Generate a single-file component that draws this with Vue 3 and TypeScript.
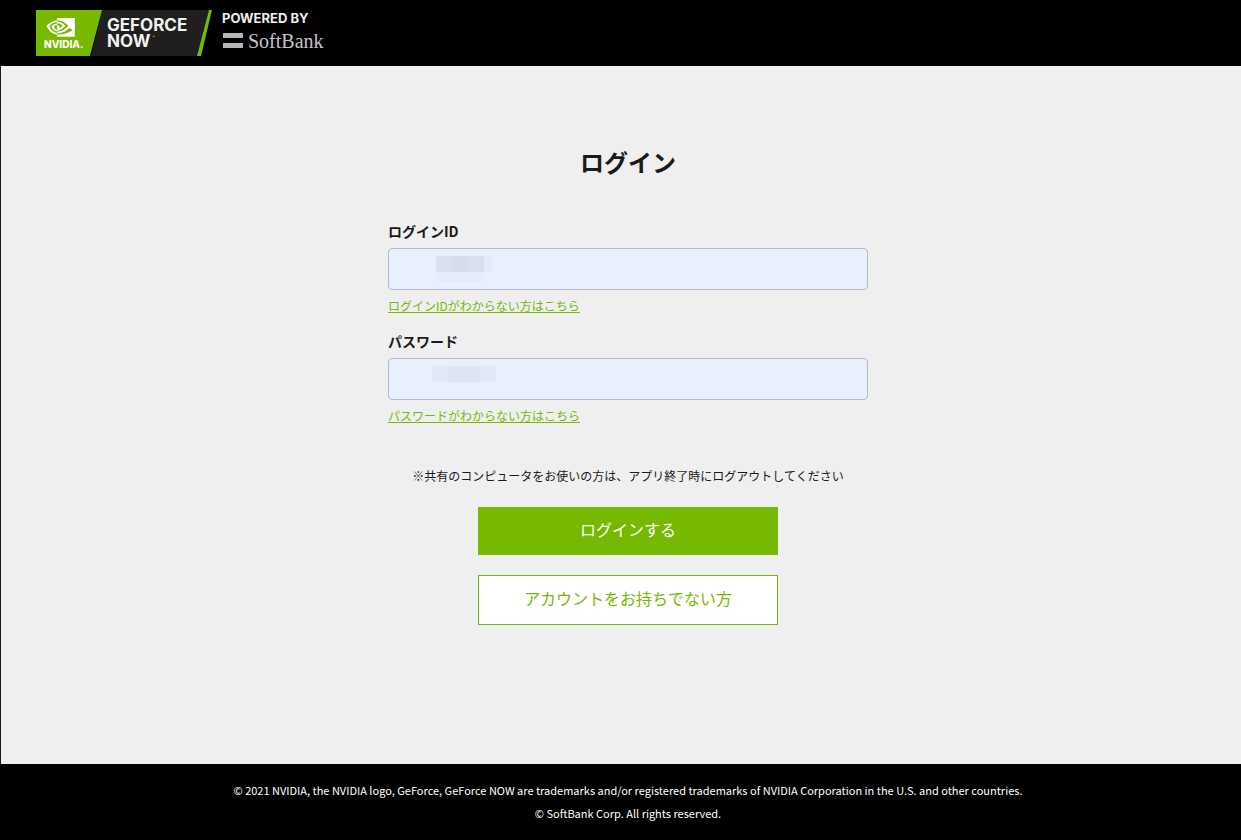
<script setup lang="ts">
import { ref } from 'vue'

interface Field {
  id: string
  label: string
  type: string
  help: string
  mask: string
}

const fields: Field[] = [
  { id: 'login-id', label: 'ログインID', type: 'text', help: 'ログインIDがわからない方はこちら', mask: 'mask-id' },
  { id: 'password', label: 'パスワード', type: 'password', help: 'パスワードがわからない方はこちら', mask: 'mask-password' },
]
const values = ref<Record<string, string>>({ 'login-id': '', password: '' })
</script>

<template>
  <div class="page">
    <header class="header">
      <svg class="logo" width="290" height="46" viewBox="0 0 290 46" role="img" aria-label="NVIDIA GeForce NOW powered by SoftBank">
        <path d="M66 0H173L162 46H55z" fill="#1f1f1f" />
        <path d="M0 0H66L54 46H0z" fill="#76b900" />
        <path d="M173 0h3L165 46h-4z" fill="#76b900" />
        <g transform="translate(10.5 3.2) scale(1.18)" fill="#fff">
          <path d="M8.948 8.798v-1.43a6.7 6.7 0 0 1 .424-.018c3.922-.124 6.493 3.374 6.493 3.374s-2.774 3.851-5.75 3.851c-.398 0-.787-.062-1.158-.185v-4.346c1.528.185 1.837.857 2.747 2.385l2.04-1.714s-1.492-1.952-4-1.952a6.016 6.016 0 0 0-.796.035m0-4.735v2.138l.424-.027c5.45-.185 9.01 4.47 9.01 4.47s-4.08 4.964-8.33 4.964c-.37 0-.733-.035-1.095-.097v1.325c.3.035.61.062.91.062 3.957 0 6.82-2.023 9.593-4.408.459.371 2.34 1.263 2.73 1.652-2.633 2.208-8.772 3.984-12.253 3.984-.335 0-.653-.018-.971-.053v1.864H24V4.063zm0 10.326v1.131c-3.657-.654-4.673-4.46-4.673-4.46s1.758-1.944 4.673-2.262v1.237H8.94c-1.528-.186-2.73 1.245-2.73 1.245s.68 2.412 2.739 3.11M2.456 10.9s2.164-3.197 6.5-3.533V6.201C4.153 6.59 0 10.653 0 10.653s2.35 6.802 8.948 7.42v-1.237c-4.84-.6-6.492-5.936-6.492-5.936z" />
        </g>
        <text class="brand" x="8" y="38">NVIDIA.</text>
        <text class="product"><tspan x="71" y="21">GEFORCE</tspan><tspan x="71" y="37">NOW</tspan></text>
        <text class="tm" x="116" y="29">™</text>
        <text class="powered" x="186" y="13">POWERED BY</text>
        <path d="M187 23h20v5h-20zM187 33h20v5h-20z" fill="#b5b5b8" />
        <text class="softbank" x="212" y="38">SoftBank</text>
      </svg>
    </header>

    <main class="main">
      <h1 class="title">ログイン</h1>
      <form class="form" @submit.prevent>
        <div v-for="f in fields" :key="f.id" class="field">
          <label class="label" :for="f.id">{{ f.label }}</label>
          <div class="control">
            <input :id="f.id" v-model="values[f.id]" class="input" :type="f.type" />
            <span class="mask" :class="f.mask" aria-hidden="true"></span>
          </div>
          <a class="help" href="#">{{ f.help }}</a>
        </div>
        <p class="notice">※共有のコンピュータをお使いの方は、アプリ終了時にログアウトしてください</p>
        <button class="button primary" type="submit">ログインする</button>
        <button class="button secondary" type="button">アカウントをお持ちでない方</button>
      </form>
    </main>

    <footer class="footer">
      <p>© 2021 NVIDIA, the NVIDIA logo, GeForce, GeForce NOW are trademarks and/or registered trademarks of NVIDIA Corporation in the U.S. and other countries.</p>
      <p>© SoftBank Corp. All rights reserved.</p>
    </footer>
  </div>
</template>

<style>
body {
  margin: 0;
  background: #000;
}
</style>

<style scoped>
.page {
  box-sizing: border-box;
  min-height: 100vh;
  display: flex;
  flex-direction: column;
  font-family: "Noto Sans CJK JP", sans-serif;
  color: #1a1a1a;
}
.header {
  box-sizing: border-box;
  height: 66px;
  padding: 10px 36px;
  background: #000;
}
.logo {
  display: block;
}
.brand,
.product,
.powered {
  font-family: Inter, sans-serif;
  font-weight: 700;
  fill: #fff;
}
.brand {
  font-size: 10px;
  font-weight: 800;
}
.product {
  font-size: 17px;
  fill: #f2f2f2;
}
.tm {
  font-family: Roboto, sans-serif;
  font-size: 5px;
  fill: #ccc;
}
.powered {
  font-size: 13px;
  fill: #eee;
}
.softbank {
  font-family: "Liberation Serif", serif;
  font-size: 20px;
  fill: #c4c4c8;
}
.main {
  flex: 1;
  padding: 78px 0 40px 14px;
  border-left: 1px solid #1a1a1a;
  background: #efefef;
}
.title {
  margin: 0 0 41px;
  font-size: 24px;
  line-height: 36px;
  font-weight: 700;
  text-align: center;
}
.form {
  display: flex;
  flex-direction: column;
  align-items: center;
}
.field {
  width: 100%;
  max-width: 480px;
  margin-bottom: 15px;
}
.label {
  display: block;
  margin-bottom: 7px;
  font-size: 14px;
  line-height: 20px;
  font-weight: 700;
}
.control {
  position: relative;
}
.input {
  display: block;
  box-sizing: border-box;
  width: 100%;
  height: 42px;
  padding: 0 12px;
  border: 1px solid #b5bac6;
  border-radius: 4px;
  background: #e8f0fe;
  font: inherit;
  font-size: 16px;
}
.mask {
  position: absolute;
  height: 16px;
  pointer-events: none;
}
.mask-id {
  top: 8px;
  left: 48px;
  width: 48px;
  background: linear-gradient(90deg, #d9dfec 33%, #d7dceb 33% 67%, #d9dfec 67%);
  box-shadow: 8px 0 0 #e3eaf8, 0 10px 0 #e4ebf9;
}
.mask-password {
  top: 8px;
  left: 44px;
  width: 64px;
  background: linear-gradient(90deg, #e1e8f6 25%, #dde4f2 25% 75%, #e1e8f6 75%);
}
.help {
  display: block;
  width: fit-content;
  margin-top: 6px;
  font-size: 12px;
  line-height: 20px;
  color: #76b900;
  text-decoration: underline;
}
.notice {
  margin: 25px 0 21px;
  font-size: 12px;
  line-height: 20px;
  text-align: center;
}
.button {
  width: 300px;
  padding: 0 0 4px;
  border: 0;
  font: inherit;
  font-size: 16px;
  line-height: 44px;
  cursor: pointer;
}
.primary {
  margin-bottom: 20px;
  background: #76b900;
  color: #fff;
}
.secondary {
  border: 1px solid #76b900;
  background: #fff;
  color: #76b900;
}
.footer {
  padding: 15px 0 15px 15px;
  background: #000;
  color: #fff;
  font-size: 11px;
  line-height: 23px;
  text-align: center;
}
.footer p {
  margin: 0;
}
</style>
